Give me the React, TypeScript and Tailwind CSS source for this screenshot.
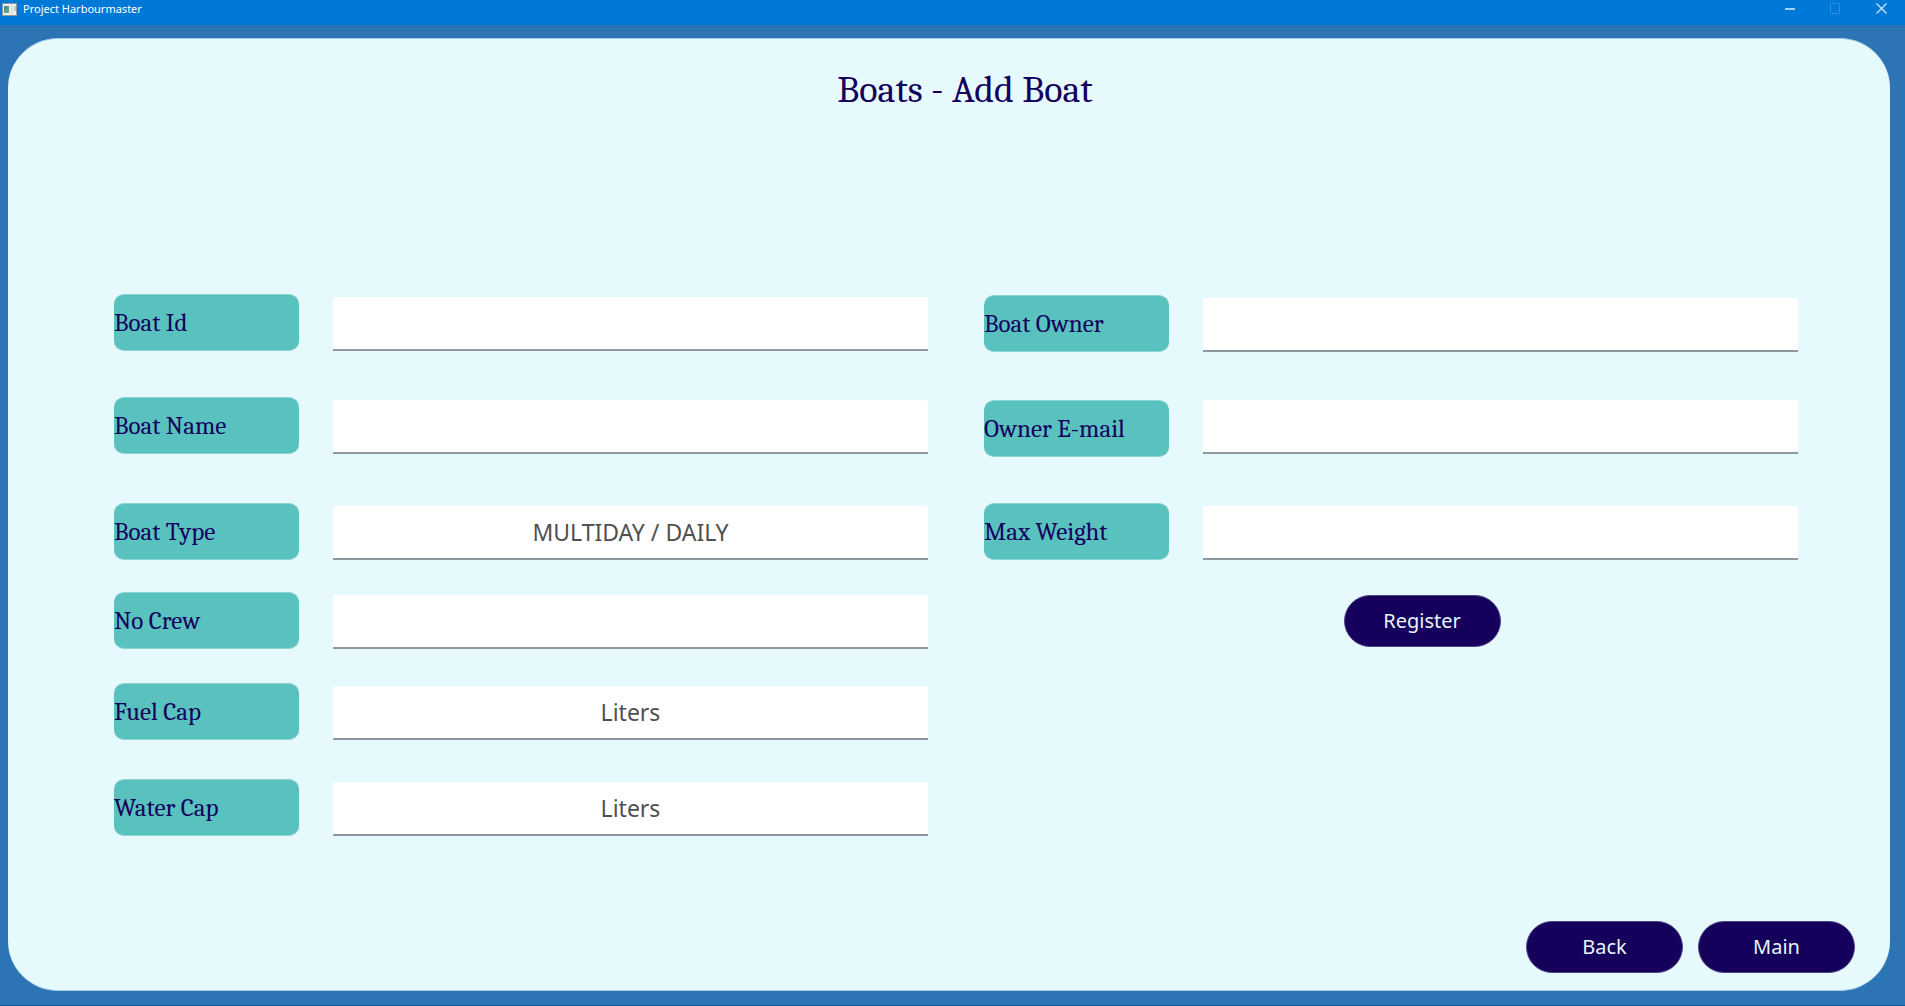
import { useId } from "react";

type Field = {
  label: string;
  placeholder?: string;
  type?: string;
  row: string;
};

const boatFields: Field[] = [
  { label: "Boat Id", row: "items-end" },
  { label: "Boat Name", row: "mt-[46px] items-end" },
  { label: "Boat Type", placeholder: "MULTIDAY / DAILY", row: "mt-[49px] items-end" },
  { label: "No Crew", row: "mt-8 items-end" },
  { label: "Fuel Cap", placeholder: "Liters", row: "mt-[34px] items-end" },
  { label: "Water Cap", placeholder: "Liters", row: "mt-[39px] items-end" },
];

const ownerFields: Field[] = [
  { label: "Boat Owner", row: "mt-px items-end" },
  { label: "Owner E-mail", type: "email", row: "mt-12 items-start" },
  { label: "Max Weight", row: "mt-[46px] items-end" },
];

function FieldRow({ field }: { field: Field }) {
  const id = useId();
  return (
    <div className={`flex gap-[34px] ${field.row}`}>
      <label
        htmlFor={id}
        className="flex h-[57px] w-[185px] shrink-0 items-center rounded-[10px] border-y border-[#8ad5d4] bg-[#59c1be] font-[Cambria,Caladea,'Noto_Serif','Liberation_Serif',serif] text-[25px] whitespace-nowrap text-[#15005c]"
      >
        {field.label}
      </label>
      <input
        id={id}
        type={field.type ?? "text"}
        placeholder={field.placeholder}
        className="h-[54px] min-w-0 flex-1 rounded-t-[3px] border-b-2 border-[#8c999e] bg-white px-4 text-center text-[23px] text-[#505050] outline-none placeholder:text-[#505050]"
      />
    </div>
  );
}

function PillButton({ children }: { children: string }) {
  return (
    <button
      type="button"
      className="flex h-[52px] w-[157px] items-center justify-center rounded-full border border-[#4f4585] bg-[#15005c] text-xl text-[#e8f4fa]"
    >
      {children}
    </button>
  );
}

function TitleBar() {
  return (
    <header className="flex h-[25px] items-start justify-between bg-[#0078d7] text-white">
      <div className="flex h-[18px] items-center gap-[6px] pl-[2px]">
        <svg width="15" height="13" viewBox="0 0 15 13" aria-hidden="true">
          <defs>
            <linearGradient id="app-icon" x1="0" y1="0" x2="1" y2="1">
              <stop offset="0" stopColor="#4c83a6" />
              <stop offset="1" stopColor="#63b36c" />
            </linearGradient>
          </defs>
          <rect x="0.5" y="0.5" width="14" height="12" fill="#eef0ee" stroke="#8d979c" />
          <rect x="2" y="3" width="5" height="7" fill="url(#app-icon)" />
          <rect x="8" y="2" width="3" height="9" fill="#dfe3e0" />
          <rect x="12" y="3" width="2" height="5" fill="#b7d5bd" />
        </svg>
        <span className="text-[11px] leading-[18px]">Project Harbourmaster</span>
      </div>
      <div className="flex h-[17px]">
        <button type="button" aria-label="Minimize" className="flex w-[45px] items-center justify-center">
          <svg width="10" height="10" viewBox="0 0 10 10" aria-hidden="true">
            <rect y="4" width="10" height="2" fill="#a5d0f3" />
          </svg>
        </button>
        <button type="button" aria-label="Maximize" disabled className="flex w-[45px] items-center justify-center">
          <svg width="10" height="11" viewBox="0 0 10 11" aria-hidden="true">
            <rect x="0.5" y="0.5" width="9" height="10" rx="1" fill="none" stroke="#2e93e3" />
          </svg>
        </button>
        <button type="button" aria-label="Close" className="flex w-12 items-center justify-center">
          <svg width="11" height="11" viewBox="0 0 11 11" aria-hidden="true">
            <path d="M.5.5l10 10M10.5.5l-10 10" stroke="#d3e8f9" strokeWidth="1.2" />
          </svg>
        </button>
      </div>
    </header>
  );
}

export default function App() {
  return (
    <div className="flex min-h-screen flex-col border-b border-[#0a5593] bg-[#2d74b5] font-['Noto_Sans',sans-serif]">
      <TitleBar />
      <main className="mt-[13px] mr-[15px] mb-[14px] ml-2 flex flex-1 flex-col rounded-[50px] border-y border-[#a5cce4] bg-[#e6f9fd]">
        <h1 className="mt-7 pl-8 text-center font-[Cambria,Caladea,'Noto_Serif','Liberation_Serif',serif] text-[38px] leading-[46px] text-[#15005c]">
          Boats - Add Boat
        </h1>
        <form className="mt-[181px] grid grid-cols-2 gap-14 pr-[92px] pl-[106px]">
          <div className="flex flex-col">
            {boatFields.map((field) => (
              <FieldRow key={field.label} field={field} />
            ))}
          </div>
          <div className="flex flex-col">
            {ownerFields.map((field) => (
              <FieldRow key={field.label} field={field} />
            ))}
            <div className="mt-[35px] flex justify-center pl-[62px]">
              <PillButton>Register</PillButton>
            </div>
          </div>
        </form>
        <nav className="mt-auto flex justify-end gap-[15px] pr-[35px] pb-[17px]">
          <PillButton>Back</PillButton>
          <PillButton>Main</PillButton>
        </nav>
      </main>
    </div>
  );
}
